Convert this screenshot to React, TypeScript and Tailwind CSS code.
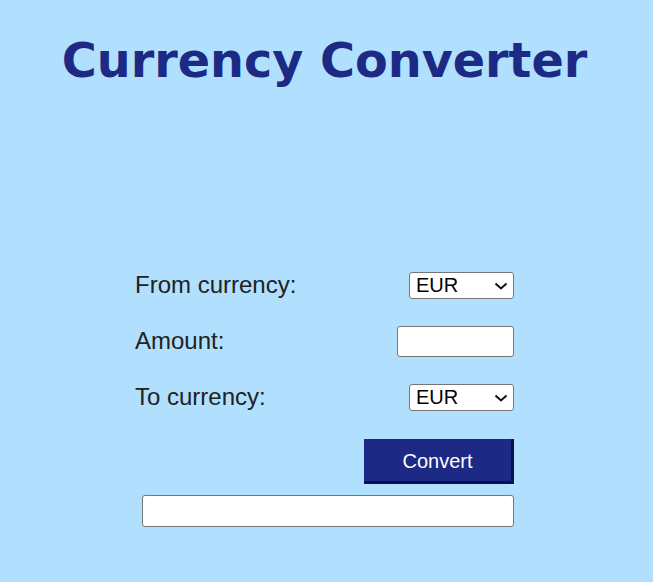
import { useState } from "react";

const currencies = ["EUR", "USD", "GBP", "JPY", "CHF"];

function CurrencySelect({ value, onChange }: { value: string; onChange: (v: string) => void }) {
  return (
    <div className="relative h-[27px] w-[105px]">
      <select
        value={value}
        onChange={(e) => onChange(e.target.value)}
        className="h-full w-full appearance-none rounded-[3px] border border-[#767676] bg-white pl-[6px] text-[20px] leading-none text-black outline-none"
        style={{ fontFamily: "'Liberation Sans', Arial, sans-serif" }}
      >
        {currencies.map((c) => (
          <option key={c} value={c}>
            {c}
          </option>
        ))}
      </select>
      <svg
        className="pointer-events-none absolute right-[6px] top-[10px]"
        width="14"
        height="8"
        viewBox="0 0 14 8"
        fill="none"
      >
        <path d="M1.5 1.5 L7 6.5 L12.5 1.5" stroke="#111" strokeWidth="2" />
      </svg>
    </div>
  );
}

export default function App() {
  const [from, setFrom] = useState("EUR");
  const [to, setTo] = useState("EUR");
  const [amount, setAmount] = useState("");
  const [result, setResult] = useState("");

  const onConvert = () => {
    const n = parseFloat(amount);
    setResult(Number.isNaN(n) ? "" : `${n.toFixed(2)} ${to}`);
  };

  return (
    <div className="min-h-[582px] w-full bg-[#b1dffe] pr-1 font-['Liberation_Sans',Arial,sans-serif]">
      <h1 className="pt-[33px] text-center font-['DejaVu_Sans',Verdana,sans-serif] text-[47.7px] font-bold leading-[56px] text-[#1d2a85]">
        Currency Converter
      </h1>

      <div className="mx-auto mt-[168px] w-[379px] text-[#222]">
        <div className="flex h-[56px] items-center justify-between">
          <label className="text-[24px]">From currency:</label>
          <CurrencySelect value={from} onChange={setFrom} />
        </div>
        <div className="flex h-[56px] items-center justify-between">
          <label className="text-[24px]">Amount:</label>
          <input
            value={amount}
            onChange={(e) => setAmount(e.target.value)}
            className="h-[31px] w-[117px] rounded-[3px] border border-[#767676] bg-white px-1 text-[18px] outline-none"
          />
        </div>
        <div className="flex h-[56px] items-center justify-between">
          <label className="text-[24px]">To currency:</label>
          <CurrencySelect value={to} onChange={setTo} />
        </div>

        <div className="mt-[14px] flex justify-end">
          <button
            type="button"
            onClick={onConvert}
            className="h-[45px] w-[150px] border-r-[3px] border-b-[3px] border-[#0b1050] bg-[#1d2a85] pt-[1px] text-[20px] text-white"
          >
            Convert
          </button>
        </div>

        <div className="mt-[11px] flex justify-end">
          <input
            readOnly
            value={result}
            className="h-[32px] w-[372px] rounded-[3px] border border-[#767676] bg-white px-1 text-[18px] outline-none"
          />
        </div>
      </div>
    </div>
  );
}
